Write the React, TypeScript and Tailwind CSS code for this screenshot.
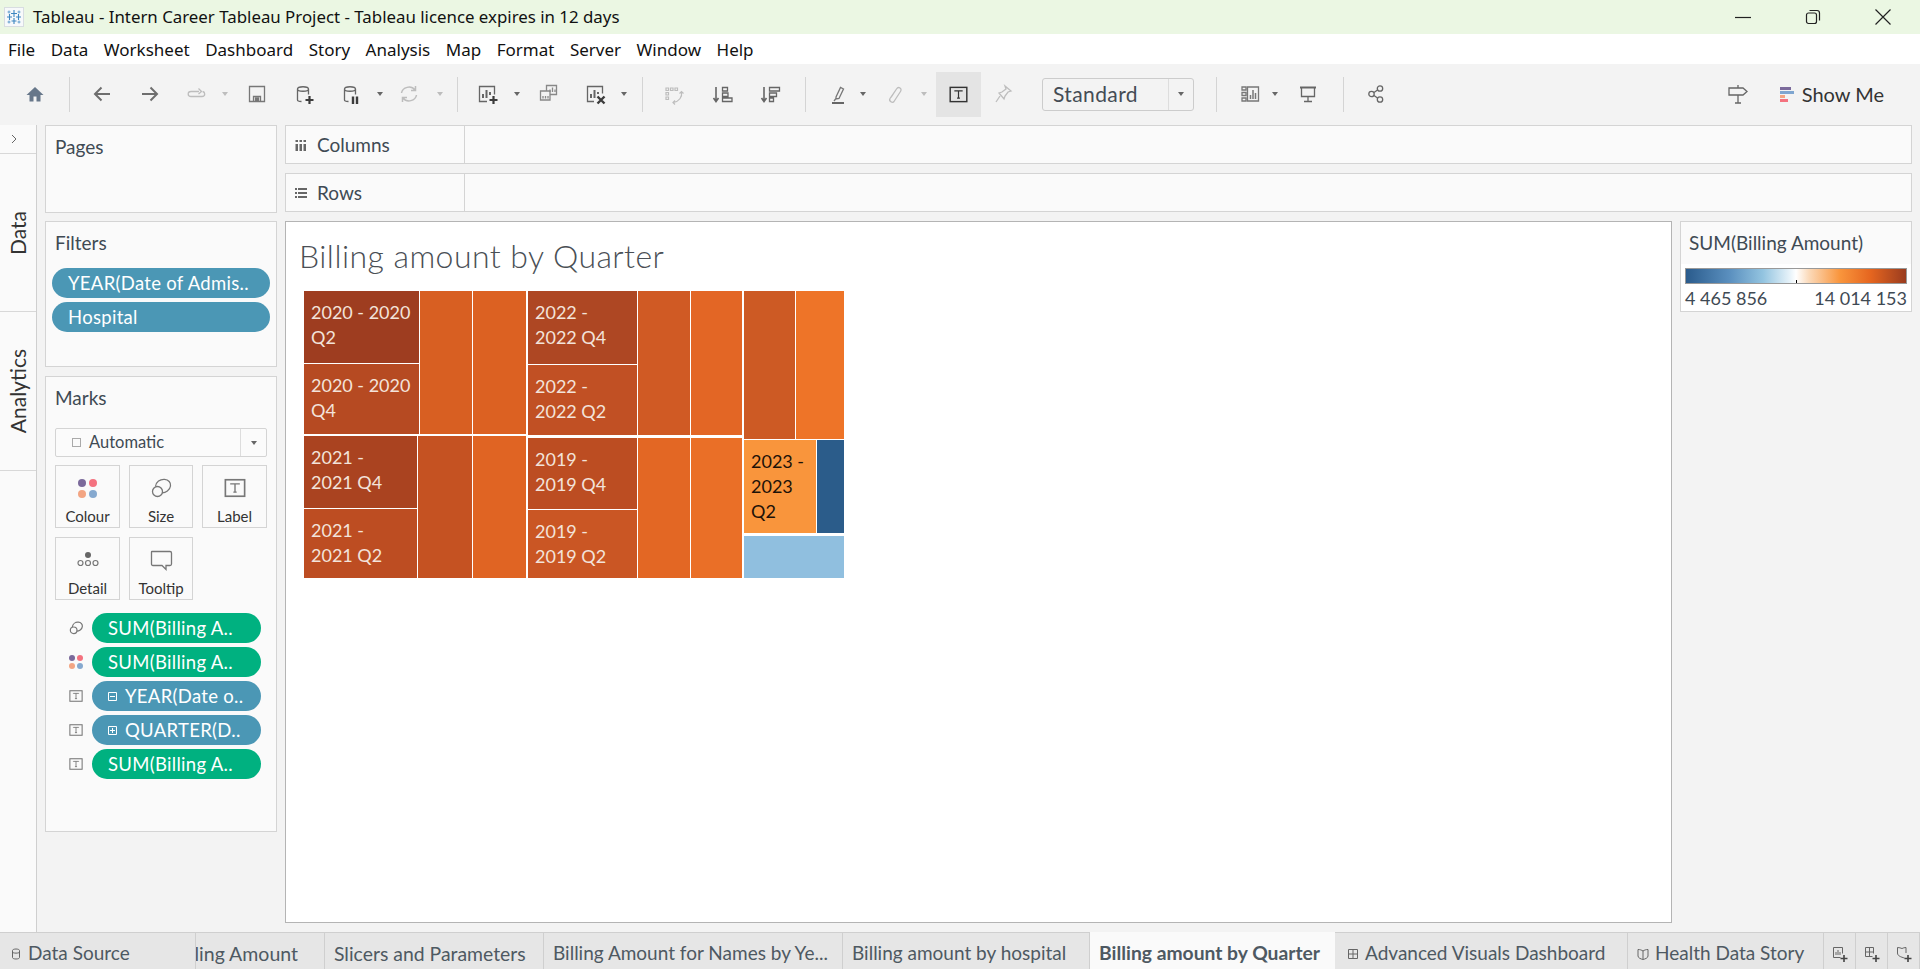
import React from "react";

const ic = "#6e6e6e";
const dim = "#bdbdbd";

function S({ children, c = ic, w = 24, sw = 1.3 }: { children: React.ReactNode; c?: string; w?: number; sw?: number }) {
  return (
    <svg width={w} height={24} viewBox={`0 0 ${w} 24`} fill="none" stroke={c} strokeWidth={sw}>
      {children}
    </svg>
  );
}

const Caret = ({ d = false, cn }: { d?: boolean; cn: string }) => (
  <div className={`w-[8px] h-[24px] flex items-center justify-center shrink-0 ${cn}`}>
    <div className={`w-0 h-0 border-l-[3px] border-r-[3px] border-t-[4px] border-l-transparent border-r-transparent ${d ? "border-t-[#bdbdbd]" : "border-t-[#666666]"}`} />
  </div>
);
const Sep = ({ cn }: { cn: string }) => <div className={`w-px h-[35px] bg-[#d4d4d4] shrink-0 ${cn}`} />;
const Slot = ({ cn, children }: { cn: string; children: React.ReactNode }) => (
  <div className={`w-[24px] h-[24px] shrink-0 ${cn}`}>{children}</div>
);

const Cyl = ({ c = ic }: { c?: string }) => (
  <path d="M5.500 7c0-3 11-3 11 0v5.500M5.500 7v11c0 1 2 1.500 4 1.500M5.500 7c0 3 11 3 11 0" stroke={c} />
);

const TBox = ({ size = 16, c = "#666666" }: { size?: number; c?: string }) => (
  <svg width={size} height={size} viewBox="0 0 16 16" fill="none" stroke={c}>
    <rect x="1" y="2" width="14" height="12" strokeWidth="1.2" />
    <path d="M5 5.500V5h6v.5M8 5v6M6.800 11h2.400" strokeWidth="1" />
  </svg>
);

const SizeIcon = ({ size = 24, sw = 1.3 }: { size?: number; sw?: number }) => (
  <svg width={size} height={size} viewBox="0 0 24 24" fill="none" stroke="#777777" strokeWidth={sw}>
    <path d="M6.500 10.500C7 6 11 3 15.500 3.300 19.500 3.600 22 6.500 21.500 10 21 14 16.500 17 13 16.800" />
    <circle cx="8.500" cy="15.500" r="5" />
  </svg>
);

const Dots = ({ s = 8, gap = 1 }: { s?: number; gap?: number }) => {
  const colors = ["#7b6a9b", "#f4727f", "#f3a583", "#86a9cf"];
  return (
    <div className="grid grid-cols-2" style={{ gap, width: s * 2 + gap }}>
      {colors.map((c) => (
        <div key={c} className="rounded-full" style={{ width: s, height: s, background: c }} />
      ))}
    </div>
  );
};

const Panel = ({ title, cn, children }: { title: string; cn: string; children?: React.ReactNode }) => (
  <div className={`border border-[#d4d4d4] bg-[#fafafa] w-[232px] shrink-0 ${cn}`}>
    <div className="font-['Lato',sans-serif] text-[19px] leading-[20px] text-[#3f4a54] pl-[9px] pt-[11px]">{title}</div>
    {children}
  </div>
);

const Pill = ({ cn, children, green = false }: { cn: string; green?: boolean; children: React.ReactNode }) => (
  <div className={`h-[30px] pt-[1px] rounded-full flex items-center font-['Lato',sans-serif] text-[18.5px] tracking-[0.3px] text-white whitespace-nowrap ${green ? "bg-[#00b180]" : "bg-[#4b97b5]"} ${cn}`}>
    {children}
  </div>
);

const Card = ({ label, children }: { label: string; children: React.ReactNode }) => (
  <div className="h-[63px] border border-[#d4d4d4] flex flex-col items-center">
    <div className="h-[38px] mt-[3px] flex items-center justify-center">{children}</div>
    <div className="font-['Lato',sans-serif] text-[15px] leading-[16px] mt-[1px] text-[#333333]">{label}</div>
  </div>
);

const MarkRow = ({ icon, children }: { icon: React.ReactNode; children: React.ReactNode }) => (
  <div className="flex items-center h-[30px]">
    <div className="w-[16px] h-[16px] ml-[22px] mr-[8px] flex items-center justify-center shrink-0">{icon}</div>
    {children}
  </div>
);

const Cell = ({ cn, lines, dark = false }: { cn: string; lines?: string[]; dark?: boolean }) => (
  <div className={`shrink-0 pl-[7px] pt-[9px] font-['Lato',sans-serif] text-[18px] leading-[25px] overflow-hidden ${dark ? "text-[#1d1208]" : "text-[#f3e3da]"} ${cn}`}>
    {lines?.map((l) => (
      <div key={l} className="whitespace-nowrap">{l}</div>
    ))}
  </div>
);

const Tab = ({ cn, children }: { cn: string; children: React.ReactNode }) => (
  <div className={`h-full flex items-center shrink-0 border-r border-[#cfcfcf] whitespace-nowrap overflow-hidden pt-[5px] ${cn}`}>{children}</div>
);

const GridIcon = () => (
  <svg width="12" height="12" viewBox="0 0 12 12" fill="none" stroke="#666666">
    <path d="M1.500 1.500h9v9h-9zM6 1.500v9M1.500 6h9" />
  </svg>
);

export default function App() {
  return (
    <div className="w-[1920px] h-[969px] overflow-hidden flex flex-col bg-[#f3f3f3] font-['Lato',sans-serif]">
      {/* Title bar */}
      <div className="h-[34px] bg-[#ebf7e3] flex items-center shrink-0">
        <svg className="ml-[4px] shrink-0" width="20" height="20" viewBox="0 0 20 20" fill="none">
          <rect x="0.500" y="0.500" width="19" height="19" fill="#f7f9fb" stroke="#d8dde1" />
          <path d="M10 3v7M7 6.500h6M10 11v6M7.500 14h5M5.500 7v6M3 10h5M14.500 7v6M12 10h5" stroke="#3d86c0" strokeWidth="1.100" />
          <path d="M5 3.500v3M3.500 5h3M15 3.500v3M13.500 5h3M5 13.500v3M3.500 15h3M15 13.500v3M13.500 15h3" stroke="#4a90c8" strokeWidth="0.800" />
        </svg>
        <div className="ml-[9px] font-['Noto_Sans',sans-serif] text-[16.85px] text-[#111111] whitespace-nowrap">
          Tableau - Intern Career Tableau Project - Tableau licence expires in 12 days
        </div>
        <div className="flex-1" />
        <svg className="mr-[54px]" width="16" height="16" viewBox="0 0 16 16" stroke="#222222" fill="none">
          <path d="M0 8.500h16" strokeWidth="1.200" />
        </svg>
        <svg className="mr-[54px]" width="16" height="16" viewBox="0 0 16 16" stroke="#222222" fill="none" strokeWidth="1.200">
          <rect x="1.500" y="4" width="10" height="10.500" rx="2" />
          <path d="M4.500 1.500h7.500c1.500 0 2.500 1 2.500 2.500v7.500" />
        </svg>
        <svg className="mr-[29px]" width="16" height="16" viewBox="0 0 16 16" stroke="#222222" fill="none" strokeWidth="1.200">
          <path d="M0.500 0.500l15 15M15.500 0.500l-15 15" />
        </svg>
      </div>
      {/* Menu */}
      <div className="h-[30px] bg-white flex items-center shrink-0 pl-[8px] pt-[1px] gap-[15.5px] font-['Noto_Sans',sans-serif] text-[17px] text-[#111111]">
        {["File", "Data", "Worksheet", "Dashboard", "Story", "Analysis", "Map", "Format", "Server", "Window", "Help"].map((m) => (
          <span key={m}>{m}</span>
        ))}
      </div>
      {/* Toolbar */}
      <div className="h-[61px] flex items-center shrink-0 pb-[1px]">
        <Slot cn="ml-[23px]"><S><path d="M12 5L3.500 13H6.500V19.500H10.500V14.500H13.500V19.500H17.500V13H20.500Z" fill="#67778a" stroke="none" /></S></Slot>
        <Sep cn="ml-[22px]" />
        <Slot cn="ml-[20px]"><S sw={2} c="#6e6e6e"><path d="M20 12H5.500M11.500 5.500L5 12l6.500 6.500" /></S></Slot>
        <Slot cn="ml-[24px]"><S sw={2} c="#6e6e6e"><path d="M4 12h14.500M12.500 5.500L19 12l-6.500 6.500" /></S></Slot>
        <Slot cn="ml-[22px]"><S c={dim}><path d="M15 9.500H7c-1.500 0-2.800 1-2.800 2.500S5.500 14.500 7 14.500h11c1.500 0 2.700-1 2.700-2.500 0-1.300-.8-2.200-2-2.500M14.500 6.500L17.500 9.500 14.500 12" /></S></Slot>
        <Caret d cn="ml-[13px]" />
        <Slot cn="ml-[16px]"><S c="#777777"><path d="M4.500 4.500h15v15h-15z" /><path d="M8.500 19.500v-5h7v5" /><path d="M10.500 19v-3h3v3z" fill="#777777" /></S></Slot>
        <Slot cn="ml-[23px]"><S c="#666666"><Cyl c="#666666" /><path d="M17.500 14v8M13.500 18h8" strokeWidth="2.200" stroke="#3c3c3c" /></S></Slot>
        <Slot cn="ml-[23px]"><S c="#666666"><Cyl c="#666666" /><path d="M14 14.500v7.500M18 14.500v7.500" strokeWidth="2.400" stroke="#3c3c3c" /></S></Slot>
        <Caret cn="ml-[13px]" />
        <Slot cn="ml-[13px]"><S c={dim} sw={1.500}><path d="M4.500 11c1-6 9.500-8 13.500-3M19.500 13c-1 6-9.500 8-13.500 3M18.500 4V8.500H14M5.500 20V15.500H10" /></S></Slot>
        <Caret d cn="ml-[15px]" />
        <Sep cn="ml-[13px]" />
        <Slot cn="ml-[17px]"><S c="#666666"><path d="M12 19.500H4.500v-15h15v8" /><path d="M8 16v-4M11.500 16V8M15 13v-3" strokeWidth="2" /><path d="M18.500 14v8M14.500 18h8" strokeWidth="2.200" stroke="#3c3c3c" /></S></Slot>
        <Caret cn="ml-[14px]" />
        <Slot cn="ml-[16px]"><S c="#888888"><path d="M9.500 8.500V3.500h10v9h-6.500M3.500 9h9.500v9H3.500z" /><path d="M13 10V7.500M15.500 10V5.500M18 10V7.500M6 16.500v-2.500M8.500 16.500v-2.500M11 16.500v-2.500" /></S></Slot>
        <Slot cn="ml-[22px]"><S c="#666666"><path d="M11 19.500H4.500v-15h15v7" /><path d="M8 16v-4M11.500 16V8M15 12v-2" strokeWidth="2" /><path d="M14.500 14.500l7 7M21.500 14.500l-7 7" strokeWidth="2.400" stroke="#3c3c3c" /></S></Slot>
        <Caret cn="ml-[13px]" />
        <Sep cn="ml-[14px]" />
        <Slot cn="ml-[20px]"><S c={dim} sw={1.200}><path d="M3 6h2.500v2.500H3zM7.500 6H10v2.500H7.500zM12 6h2.500v2.500H12zM3 10.500h2.500V13H3zM3 15h2.500v2.500H3z" /><path d="M18.500 10c1 5-2.500 9.500-8 10.500M16.500 11.500l2-2 2 2M12 18.500l-2 2 2 2" /></S></Slot>
        <Slot cn="ml-[24px]"><S c="#666666"><path d="M5 5v14M2.500 16L5 19.500 7.500 16" strokeWidth="1.600" /><path d="M11.500 5.500h5v3.500h-5zM11.500 11h5.500v3.500h-5.500zM11.500 16h9.500v3.500h-9.500z" /></S></Slot>
        <Slot cn="ml-[24px]"><S c="#666666"><path d="M5 5v14M2.500 16L5 19.500 7.500 16" strokeWidth="1.600" /><path d="M10.500 5.500h10v3.500h-10zM10.500 11h7v3.500h-7zM10.500 16h4v3.500h-4z" /></S></Slot>
        <Sep cn="ml-[22px]" />
        <Slot cn="ml-[20px]"><S c="#777777"><path d="M10 15l4.500-9.500 3 1.500-4.500 9.500-3 .5zM8 19l2-2.500" /><path d="M6 21h12" strokeWidth="2" stroke="#666666" /></S></Slot>
        <Caret cn="ml-[9px]" />
        <Slot cn="ml-[16px]"><S c={dim}><path d="M8 15.500L13.500 7c2-3 6-.5 4 2.500L11 19.500c-1.500 2-5.500-.5-4-3L13.500 7" /></S></Slot>
        <Caret d cn="ml-[13px]" />
        <div className="ml-[8px] w-[45px] h-[45px] bg-[#e4e4e4] shrink-0 flex items-center justify-center">
          <TBox size={19} c="#333333" />
        </div>
        <Slot cn="ml-[10px]"><S c={dim}><path d="M14 4l6 5-3 1-3 4-1 3-5-6 3-1 4-3zM9 14l-4 6" /></S></Slot>
        <div className="ml-[27px] w-[152px] h-[33px] shrink-0 border border-[#cccccc] rounded-[3px] flex items-center">
          <div className="w-[126px] pl-[10px] text-[21px] tracking-[0.4px] text-[#444c55] font-['Lato',sans-serif]">Standard</div>
          <div className="h-full w-[25px] border-l border-[#dddddd] flex items-center justify-center">
            <div className="w-0 h-0 border-l-[3.500px] border-r-[3.500px] border-t-[4px] border-l-transparent border-r-transparent border-t-[#666666]" />
          </div>
        </div>
        <Sep cn="ml-[22px]" />
        <Slot cn="ml-[20px]"><S c="#777777"><path d="M9 5H5v3h4zM9 10.500H5v3h4zM9 16H5v3h4zM10.500 5h11v14h-11z" /><path d="M13.500 17v-4M16 17V8M18.500 17v-6" strokeWidth="1.500" /></S></Slot>
        <Caret cn="ml-[10px]" />
        <Slot cn="ml-[17px]"><S c="#666666"><path d="M4 5.500h16" strokeWidth="2" /><path d="M5.500 5.500v9h13v-9M12 14.500v5M8 19.500h8" /></S></Slot>
        <Sep cn="ml-[23px]" />
        <Slot cn="ml-[20px]"><S c="#666666"><circle cx="7.500" cy="12" r="2.700" /><circle cx="16" cy="6.500" r="2.700" /><circle cx="16" cy="17.500" r="2.700" /><path d="M10 10.500l3.500-2.500M10 13.500l3.500 2.500" /></S></Slot>
        <div className="flex-1" />
        <Slot cn=""><S c="#666666"><path d="M3 6h14l4 3.500L17 13H3zM12 3v3M12 13v8M9 21h6" /></S></Slot>
        <div className="ml-[30px] w-[14px] flex flex-col gap-[1px] shrink-0">
          <div className="h-[3px] w-[11px] bg-[#7b6a9b]" />
          <div className="h-[3px] w-[14px] bg-[#7fa6d0]" />
          <div className="h-[3px] w-[5px] bg-[#f3a583]" />
          <div className="h-[3px] w-[8px] bg-[#f4727f]" />
        </div>
        <div className="ml-[8px] mr-[36px] text-[20px] text-[#333333] font-['Lato',sans-serif] whitespace-nowrap">Show Me</div>
      </div>
      {/* Main */}
      <div className="h-[807px] shrink-0 flex">
        {/* Side strip */}
        <div className="w-[37px] shrink-0 bg-[#fafafa] border-r border-[#cfcfcf] flex flex-col">
          <div className="h-[29px] border-b border-[#d8d8d8] flex items-center justify-center pr-[9px]">
            <svg width="8" height="10" viewBox="0 0 8 10" fill="none" stroke="#666666"><path d="M2 1l4 4-4 4" /></svg>
          </div>
          <div className="h-[158px] border-b border-[#d8d8d8] flex items-center justify-center">
            <div className="[writing-mode:vertical-rl] rotate-180 text-[21px] text-[#333333]">Data</div>
          </div>
          <div className="h-[159px] border-b border-[#d8d8d8] flex items-center justify-center">
            <div className="[writing-mode:vertical-rl] rotate-180 text-[21px] text-[#333333]">Analytics</div>
          </div>
        </div>
        {/* Cards column */}
        <div className="w-[248px] shrink-0 pl-[8px] flex flex-col">
          <Panel title="Pages" cn="h-[88px]" />
          <Panel title="Filters" cn="h-[146px] mt-[8px]">
            <div className="mt-[15px] pl-[6px] flex flex-col gap-[4px]">
              <Pill cn="w-[218px] pl-[16px]">YEAR(Date of Admis..</Pill>
              <Pill cn="w-[218px] pl-[16px]">Hospital</Pill>
            </div>
          </Panel>
          <Panel title="Marks" cn="h-[456px] mt-[9px]">
            <div className="mt-[20px] ml-[9px] w-[212px] h-[29px] border border-[#d4d4d4] rounded-[2px] flex items-center text-[16.5px] text-[#3f4a54] bg-[#fbfbfb]">
              <div className="w-[9px] h-[9px] border border-[#aaaaaa] ml-[16px] mr-[8px]" />
              <div className="flex-1">Automatic</div>
              <div className="w-[26px] h-full border-l border-[#dddddd] flex items-center justify-center">
                <div className="w-0 h-0 border-l-[3px] border-r-[3px] border-t-[4px] border-l-transparent border-r-transparent border-t-[#666666]" />
              </div>
            </div>
            <div className="mt-[8px] ml-[9px] w-[212px] grid grid-cols-[65px_64px_65px] gap-x-[9px] gap-y-[9px]">
              <Card label="Colour"><Dots s={8} gap={3} /></Card>
              <Card label="Size"><SizeIcon /></Card>
              <Card label="Label"><TBox size={22} c="#777777" /></Card>
              <Card label="Detail">
                <svg width="24" height="20" viewBox="0 0 24 20" fill="none" stroke="#777777" strokeWidth="1.200">
                  <circle cx="12" cy="5" r="3" fill="#666666" stroke="none" />
                  <circle cx="4.500" cy="13" r="2.500" />
                  <circle cx="12" cy="13" r="2.500" />
                  <circle cx="19.500" cy="13" r="2.500" />
                </svg>
              </Card>
              <Card label="Tooltip">
                <svg width="24" height="24" viewBox="0 0 24 24" fill="none" stroke="#777777" strokeWidth="1.300">
                  <path d="M3 3.500h18c1 0 1.500.5 1.500 1.500v11c0 1-.5 1.500-1.500 1.500h-4v4l-4-4H4c-1 0-1.500-.5-1.500-1.500V4c0-.5.5-.5.500-.5z" />
                </svg>
              </Card>
            </div>
            <div className="mt-[13px] flex flex-col gap-[4px]">
              <MarkRow icon={<SizeIcon size={16} sw={1.800} />}><Pill green cn="w-[169px] pl-[16px]">SUM(Billing A..</Pill></MarkRow>
              <MarkRow icon={<Dots s={6} gap={2} />}><Pill green cn="w-[169px] pl-[16px]">SUM(Billing A..</Pill></MarkRow>
              <MarkRow icon={<TBox size={14} c="#777777" />}>
                <Pill cn="w-[169px] pl-[16px]">
                  <svg className="mr-[8px] shrink-0" width="9" height="9" viewBox="0 0 9 9" fill="none" stroke="white"><path d="M.5.5h8v8h-8zM2 4.500h5" /></svg>
                  YEAR(Date o..
                </Pill>
              </MarkRow>
              <MarkRow icon={<TBox size={14} c="#777777" />}>
                <Pill cn="w-[169px] pl-[16px]">
                  <svg className="mr-[8px] shrink-0" width="9" height="9" viewBox="0 0 9 9" fill="none" stroke="white"><path d="M.5.5h8v8h-8zM2 4.500h5M4.500 2v5" /></svg>
                  QUARTER(D..
                </Pill>
              </MarkRow>
              <MarkRow icon={<TBox size={14} c="#777777" />}><Pill green cn="w-[169px] pl-[16px]">SUM(Billing A..</Pill></MarkRow>
            </div>
          </Panel>
        </div>
        {/* Right area */}
        <div className="flex-1 flex flex-col min-w-0 pr-[8px]">
          <div className="h-[39px] border border-[#d4d4d4] bg-[#fafafa] flex shrink-0">
            <div className="w-[179px] h-full border-r border-[#d4d4d4] flex items-center text-[19px] text-[#3f4a54] shrink-0 pt-[1px]">
              <svg className="ml-[9px] mr-[10px]" width="12" height="13" viewBox="0 0 12 13" fill="#666666">
                <rect x="0.500" y="1" width="2.500" height="2" /><rect x="4.500" y="1" width="2.500" height="2" /><rect x="8.500" y="1" width="2.500" height="2" />
                <rect x="0.500" y="5" width="2.500" height="7" /><rect x="4.500" y="5" width="2.500" height="7" /><rect x="8.500" y="5" width="2.500" height="7" />
              </svg>
              Columns
            </div>
          </div>
          <div className="h-[39px] mt-[9px] border border-[#d4d4d4] bg-[#fafafa] flex shrink-0">
            <div className="w-[179px] h-full border-r border-[#d4d4d4] flex items-center text-[19px] text-[#3f4a54] shrink-0 pt-[1px]">
              <svg className="ml-[9px] mr-[10px]" width="12" height="12" viewBox="0 0 12 12" fill="#666666">
                <rect x="0" y="1" width="2" height="2" /><rect x="0" y="5" width="2" height="2" /><rect x="0" y="9" width="2" height="2" />
                <rect x="3" y="1" width="9" height="2" /><rect x="3" y="5" width="9" height="2" /><rect x="3" y="9" width="9" height="2" />
              </svg>
              Rows
            </div>
          </div>
          <div className="flex mt-[9px] flex-1 min-h-0">
            <div className="w-[1387px] h-[702px] bg-white border border-[#b4b4b4] shrink-0">
              <div className="pl-[13px] pt-[16px] text-[32px] leading-[36px] font-light tracking-[0.45px] text-[#4a4f55] font-['Lato',sans-serif] whitespace-nowrap">
                Billing amount by Quarter
              </div>
              {/* Treemap */}
              <div className="ml-[18px] mt-[17px] flex w-[542px] h-[287px] gap-[2px]">
                <div className="w-[222px] flex flex-col gap-[2px] shrink-0">
                  <div className="flex h-[143px] gap-px">
                    <div className="w-[115px] flex flex-col gap-px">
                      <Cell cn="h-[72px] bg-[#9e3d20]" lines={["2020 - 2020", "Q2"]} />
                      <Cell cn="h-[70px] bg-[#b64a22]" lines={["2020 - 2020", "Q4"]} />
                    </div>
                    <Cell cn="w-[52px] bg-[#d85f22]" />
                    <Cell cn="w-[53px] bg-[#dc6122]" />
                  </div>
                  <div className="flex h-[142px] gap-px">
                    <div className="w-[113px] flex flex-col gap-px">
                      <Cell cn="h-[72px] bg-[#aa4320]" lines={["2021 -", "2021 Q4"]} />
                      <Cell cn="h-[69px] bg-[#bd4d22]" lines={["2021 -", "2021 Q2"]} />
                    </div>
                    <Cell cn="w-[54px] bg-[#c55222]" />
                    <Cell cn="w-[53px] bg-[#e06423]" />
                  </div>
                </div>
                <div className="w-[214px] flex flex-col gap-[3px] shrink-0">
                  <div className="flex h-[144px] gap-px">
                    <div className="w-[109px] flex flex-col gap-px">
                      <Cell cn="h-[73px] bg-[#ae4723]" lines={["2022 -", "2022 Q4"]} />
                      <Cell cn="h-[70px] bg-[#c15024]" lines={["2022 -", "2022 Q2"]} />
                    </div>
                    <Cell cn="w-[52px] bg-[#d05a24]" />
                    <Cell cn="w-[51px] bg-[#e36625]" />
                  </div>
                  <div className="flex h-[140px] gap-px">
                    <div className="w-[109px] flex flex-col gap-px">
                      <Cell cn="h-[71px] bg-[#bc4d22]" lines={["2019 -", "2019 Q4"]} />
                      <Cell cn="h-[68px] bg-[#ca5624]" lines={["2019 -", "2019 Q2"]} />
                    </div>
                    <Cell cn="w-[52px] bg-[#e36724]" />
                    <Cell cn="w-[51px] bg-[#ea6f27]" />
                  </div>
                </div>
                <div className="w-[100px] flex flex-col shrink-0">
                  <div className="flex h-[148px] gap-px">
                    <Cell cn="w-[51px] bg-[#cd5a24]" />
                    <Cell cn="w-[48px] bg-[#ee7428]" />
                  </div>
                  <div className="flex h-[93px] gap-px mt-px">
                    <Cell dark cn="w-[72px] bg-[#f9953c]" lines={["2023 -", "2023", "Q2"]} />
                    <Cell cn="w-[27px] bg-[#2b5c8a]" />
                  </div>
                  <Cell cn="h-[42px] mt-[3px] bg-[#90bfdf]" />
                </div>
              </div>
            </div>
            {/* Legend */}
            <div className="ml-[8px] w-[232px] h-[91px] border border-[#d4d4d4] bg-white shrink-0">
              <div className="h-[42px] bg-[#fafafa] pl-[8px] pt-[10px] text-[19px] leading-[22px] text-[#3f4a54] whitespace-nowrap">SUM(Billing Amount)</div>
              <div className="ml-[4px] mt-[4px] w-[222px] h-[16px] border border-[#999999] relative bg-[linear-gradient(to_right,#2a5b8c_0%,#5b90bf_20%,#93c4e0_35%,#e6f2f9_47%,#ffffff_50%,#fbd9b8_56%,#f9953c_70%,#e5651f_84%,#9a3c1f_100%)]">
                <div className="absolute left-[110px] bottom-0 w-px h-[3px] bg-black" />
              </div>
              <div className="ml-[4px] w-[222px] flex justify-between text-[18px] leading-[24px] mt-[2px] text-[#3f4a54]">
                <span>4 465 856</span>
                <span>14 014 153</span>
              </div>
            </div>
          </div>
        </div>
      </div>
      {/* Tabs */}
      <div className="h-[37px] shrink-0 bg-[#e6e6e6] border-t border-[#cfcfcf] flex text-[19px] text-[#4e5962]">
        <Tab cn="w-[196px] pl-[12px]">
          <svg className="mr-[8px] shrink-0" width="8" height="12" viewBox="0 0 8 12" fill="none" stroke="#666666"><path d="M.5 2.500c0-2 7-2 7 0v7c0 2-7 2-7 0zM.5 4c0 1.500 7 1.500 7 0" /></svg>
          Data Source
        </Tab>
        <Tab cn="w-[129px] justify-end pr-[26px]"><span className="text-[19.5px]">Billing Amount</span></Tab>
        <Tab cn="w-[219px] pl-[9px]"><span className="text-[19.4px]">Slicers and Parameters</span></Tab>
        <Tab cn="w-[299px] pl-[9px]">Billing Amount for Names by Ye...</Tab>
        <Tab cn="w-[247px] pl-[9px]">Billing amount by hospital</Tab>
        <div className="w-[245px] h-[38px] -mt-px pt-[5px] bg-[#fafafa] shrink-0 flex items-center pl-[9px] font-bold text-[19.3px] text-[#4e5962] whitespace-nowrap">Billing amount by Quarter</div>
        <Tab cn="w-[293px] pl-[12px]">
          <span className="mr-[6px] flex"><GridIcon /></span>
          Advanced Visuals Dashboard
        </Tab>
        <Tab cn="w-[196px] pl-[9px]">
          <svg className="mr-[6px] shrink-0" width="12" height="12" viewBox="0 0 12 12" fill="none" stroke="#666666"><path d="M1 1.500c2 0 3.500.5 5 1.500 1.500-1 3-1.500 5-1.500V8c0 2-3 3-5 3.500C4 11 1 10 1 8zM6 3v8" /></svg>
          Health Data Story
        </Tab>
        {[0, 1, 2].map((i) => (
          <Tab key={i} cn="w-[32px] justify-center">
            <svg width="18" height="18" viewBox="0 0 18 18" fill="none" stroke="#666666">
              {i === 0 && <path d="M9.500 12.500H2.500v-10h9v6M5 10V7M7 10V5M9 10V7" />}
              {i === 1 && <path d="M9.500 11.500H2.500v-9h8v6M2.500 7h8M6.500 2.500v9" />}
              {i === 2 && <path d="M9.500 13C6 12 2.500 11 2.500 8V2.500c2 0 3 .5 4.500 1 1-.5 2.500-1 4-1V8" />}
              <path d="M13 10v7M9.500 13.500h7" strokeWidth="1.600" stroke="#444444" />
            </svg>
          </Tab>
        ))}
      </div>
    </div>
  );
}
